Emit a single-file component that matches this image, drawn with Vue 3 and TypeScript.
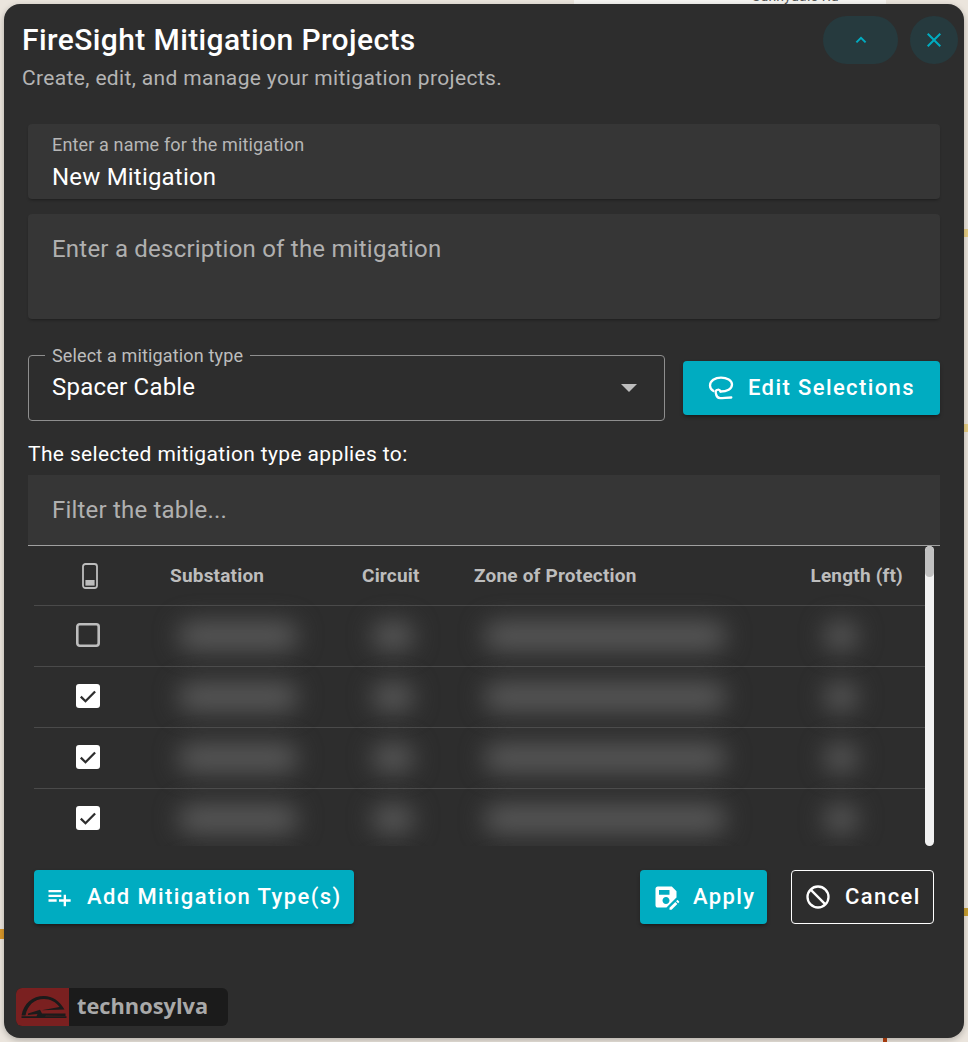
<script setup lang="ts">
const columns = ['sub', 'cir', 'zone', 'len'] as const
const rows = [
  { id: 1, checked: false },
  { id: 2, checked: true },
  { id: 3, checked: true },
  { id: 4, checked: true },
  { id: 5, checked: true },
]
</script>

<template>
  <div class="page">
    <div class="map" aria-hidden="true">
      <i class="strip"></i>
      <span class="street">Sunnydale Rd</span>
      <i class="road r1"></i><i class="road r2"></i><i class="road r3"></i><i class="road r4"></i>
      <i class="red"></i>
    </div>
    <section class="dialog">
      <header class="head">
        <div>
          <h1>FireSight Mitigation Projects</h1>
          <p>Create, edit, and manage your mitigation projects.</p>
        </div>
        <div class="head-actions">
          <button class="tonal pill" aria-label="Collapse">
            <svg width="16" height="16" viewBox="0 0 16 16"><path d="M3.4 10.4 8 5.8l4.6 4.6" fill="none" stroke="currentColor" stroke-width="2"/></svg>
          </button>
          <button class="tonal round" aria-label="Close">
            <svg width="24" height="24" viewBox="0 0 24 24"><path d="M19 6.41 17.59 5 12 10.59 6.41 5 5 6.41 10.59 12 5 17.59 6.41 19 12 13.41 17.59 19 19 17.59 13.41 12z" fill="currentColor"/></svg>
          </button>
        </div>
      </header>

      <div class="body">
        <div class="field name">
          <label>Enter a name for the mitigation</label>
          <div class="value">New Mitigation</div>
        </div>
        <div class="field desc">Enter a description of the mitigation</div>

        <div class="type-row">
          <div class="select">
            <span class="legend">Select a mitigation type</span>
            <span class="value">Spacer Cable</span>
            <i class="caret"></i>
          </div>
          <button class="btn edit">
            <svg width="28" height="28" viewBox="0 0 28 28" fill="none" stroke="currentColor" stroke-width="2.3" stroke-linecap="round"><path d="M7.5 17C5 15.6 4 13.4 4 11.5 4 6.8 9 3.6 15 3.6c6 0 11 3 11 6.9 0 4.4-5 7-11.5 7"/><path d="M14.5 17.5c-.4-1.4-1.6-2-2.8-1.8-1.4.2-2.2 1.4-2 2.8.4 3 1.8 5.6 4.6 5.6 3.400 0 6.600-.6 11-.6"/></svg>
            Edit Selections
          </button>
        </div>

        <div class="applies">The selected mitigation type applies to:</div>
        <div class="filter">Filter the table...</div>

        <div class="table-wrap">
          <div class="table">
            <div class="row header">
              <div class="c-check">
                <svg width="16" height="26" viewBox="0 0 16 26"><rect x="1" y="1" width="14" height="24" rx="2.5" fill="none" stroke="#bdbdbd" stroke-width="1.8"/><rect x="3.4" y="17" width="9.2" height="5.6" fill="#bdbdbd"/></svg>
              </div>
              <div>Substation</div>
              <div>Circuit</div>
              <div>Zone of Protection</div>
              <div class="right">Length (ft)</div>
            </div>
            <div v-for="r in rows" :key="r.id" class="row">
              <div class="c-check">
                <svg v-if="r.checked" width="24" height="24" viewBox="0 0 24 24"><rect width="24" height="24" rx="3" fill="#fff"/><path d="m4.800 12.600 4.700 4.600 9.600-9.700" fill="none" stroke="#2d2d2d" stroke-width="2.300"/></svg>
                <svg v-else width="24" height="24" viewBox="0 0 24 24"><rect x="1.300" y="1.300" width="21.400" height="21.400" rx="2.400" fill="none" stroke="#bdbdbd" stroke-width="2.600"/></svg>
              </div>
              <div v-for="c in columns" :key="c" class="cell"><span class="blur" :class="c"></span></div>
            </div>
          </div>
          <div class="scrollbar"><i class="thumb"></i></div>
        </div>

        <footer class="actions">
          <button class="btn add">
            <svg width="28" height="28" viewBox="0 0 24 24" fill="currentColor"><path d="M14 10H3v2h11v-2zm0-4H3v2h11V6zm4 8v-4h-2v4h-4v2h4v4h2v-4h4v-2h-4zM3 16h7v-2H3v2z"/></svg>
            Add Mitigation Type(s)
          </button>
          <span class="grow"></span>
          <button class="btn apply">
            <svg width="28" height="28" viewBox="0 0 24 24" fill="currentColor"><path d="M21 12.4V7l-4-4H5C3.89 3 3 3.9 3 5v14c0 1.1.89 2 2 2h7.4L21 12.4zM15 15c0 1.66-1.34 3-3 3s-3-1.34-3-3 1.34-3 3-3 3 1.34 3 3zM6 6h9v4H6V6zm13.99 10.25 1.77 1.77L16.77 23H15v-1.77l4.99-4.98zm3.26.26-.85.85-1.77-1.77.85-.85c.2-.2.51-.2.71 0l1.06 1.06c.2.19.2.51 0 .71z"/></svg>
            Apply
          </button>
          <button class="btn cancel">
            <svg width="28" height="28" viewBox="0 0 24 24" fill="none" stroke="currentColor" stroke-width="2"><circle cx="12" cy="12" r="9"/><path d="M5.700 5.700l12.600 12.600"/></svg>
            Cancel
          </button>
        </footer>

        <div class="logo">
          <span class="mark">
            <svg width="53" height="38" viewBox="0 0 53 38" fill="#1b1b1b"><path d="M5.500 27.500C7.500 15.500 16.500 8 28 8c8.500 0 15.500 5 20.500 13.500l-23 .8 18-3.300C40 14 34.500 11 28 11 18.500 11 11.500 17 9.500 27.500z"/><path d="M12 25.500l12-3.700 2 3.700h23.500v2.600L30 27.700l-1 .6h21.500v1.600H5.500v-1.600h15l1-2.300-9.500 1z"/></svg>
          </span>
          <span class="word">technosylva</span>
        </div>
      </div>
    </section>
  </div>
</template>

<style>
html, body { margin: 0; background: #ebe5dd; }
</style>

<style scoped>
* { box-sizing: border-box; }
.page { position: relative; width: 968px; height: 1042px; padding: 4px; overflow: hidden; font-family: Roboto, "Liberation Sans", sans-serif; }
.map { position: absolute; inset: 0; overflow: hidden; }
.strip { position: absolute; left: 574px; top: 0; width: 312px; height: 4px; background: #f6f5f2; }
.street { position: absolute; left: 752px; top: -12px; font-size: 14px; line-height: 16px; color: #555; white-space: nowrap; letter-spacing: .2px; }
.road { position: absolute; display: block; }
.r1 { right: 0; top: 229px; width: 4px; height: 8px; background: #e8cf86; }
.r2 { right: 0; top: 424px; width: 4px; height: 8px; background: #e8cf86; }
.r3 { left: 0; top: 929px; width: 4px; height: 10px; background: #d9982a; }
.r4 { right: 0; top: 908px; width: 4px; height: 8px; background: #c9a033; }
.red { position: absolute; left: 883px; bottom: 0; width: 4px; height: 4px; background: #b5410e; }

.dialog { position: relative; display: flex; flex-direction: column; height: 1034px; background: #2d2d2d; border-radius: 16px; color: #fff; box-shadow: 0 2px 6px rgba(0,0,0,.25); }
.head { display: flex; justify-content: space-between; padding: 12px 6px 0 18px; height: 120px; }
h1 { margin: 6px 0 0; font-size: 30px; line-height: 36px; font-weight: 500; letter-spacing: .4px; white-space: nowrap; }
.head p { margin: 5px 0 0; font-size: 21px; line-height: 30px; color: #b4b4b4; letter-spacing: .36px; }
.head-actions { display: flex; gap: 12px; }
.tonal { height: 48px; border: 0; padding: 0; display: flex; align-items: center; justify-content: center; background: #263a3e; color: #00acc1; }
.pill { width: 75px; border-radius: 24px; }
.round { width: 48px; border-radius: 50%; }

.body { display: flex; flex-direction: column; padding: 0 24px; flex: 1; }
.field { background: #363636; border-radius: 4px; box-shadow: 0 2px 3px -1px rgba(0,0,0,.35); padding: 0 24px; }
.name { height: 75px; padding-top: 11px; }
.name label { display: block; font-size: 18px; line-height: 20px; letter-spacing: .15px; color: #b7b7b7; }
.name .value { margin-top: 7px; }
.value { font-size: 24px; line-height: 30px; letter-spacing: .2px; color: #fff; }
.desc { height: 105px; margin-top: 15px; padding-top: 19px; font-size: 24px; line-height: 32px; letter-spacing: .22px; color: #b0b0b0; }

.type-row { display: flex; align-items: center; gap: 18px; margin-top: 36px; height: 66px; }
.select { position: relative; flex: 1; height: 66px; border: 1px solid #8e8e8e; border-radius: 4px; display: flex; align-items: center; padding: 0 23px 2px; }
.legend { position: absolute; left: 16px; top: -10px; padding: 0 7px; background: #2d2d2d; font-size: 18px; line-height: 20px; letter-spacing: .15px; color: #bdbdbd; white-space: nowrap; }
.caret { position: absolute; right: 27px; top: 28px; border: 8px solid transparent; border-top: 8px solid #bdbdbd; border-bottom: 0; }

.btn { height: 54px; display: flex; align-items: center; border-radius: 4px; border: 0; font: 500 22px/1 Roboto, sans-serif; letter-spacing: 1.4px; color: #fff; background: #00acc1; box-shadow: 0 3px 3px -2px rgba(0,0,0,.3), 0 2px 4px rgba(0,0,0,.2); padding: 0; }
.edit { width: 257px; padding-left: 23px; gap: 14px; }
.add { width: 320px; padding-left: 11px; gap: 14px; margin-left: 6px; }
.apply { width: 127px; padding-left: 12px; gap: 13px; }
.cancel { width: 143px; padding-left: 12px; gap: 13px; background: transparent; border: 1px solid #fff; margin-left: 24px; margin-right: 6px; box-shadow: none; }

.applies { margin-top: 21px; height: 33px; font-size: 21px; line-height: 24px; letter-spacing: .36px; color: #fff; }
.filter { height: 71px; background: #363636; border-bottom: 1px solid #a0a0a0; padding: 19px 24px 0; font-size: 24px; line-height: 32px; letter-spacing: .2px; color: #b0b0b0; }

.table-wrap { display: flex; height: 300px; padding: 0 6px; }
.table { flex: 1; height: 300px; overflow: hidden; }
.row { display: grid; grid-template-columns: 136px 192px 112px 1fr 120px; height: 61px; align-items: center; border-bottom: 1px solid #4a4a4a; }
.row.header { height: 60px; font-weight: 700; font-size: 19px; color: #bdbdbd; letter-spacing: .2px; }
.right { text-align: right; padding-right: 22px; white-space: nowrap; }
.c-check { display: flex; justify-content: center; padding: 0 28px 2px 0; }
.header .c-check { padding: 0 24px 0 0; }
.cell { height: 60px; display: flex; align-items: center; }
.blur { display: block; height: 28px; background: #595959; filter: blur(12px); border-radius: 14px; flex: none; }
.sub { width: 120px; margin-left: 8px; }
.cir { width: 42px; margin-left: 10px; }
.zone { width: 242px; margin-left: 10px; }
.len { width: 34px; margin-left: 19px; }
.scrollbar { width: 9px; height: 300px; background: #f1f1f1; border-radius: 5px; overflow: hidden; }
.thumb { display: block; height: 31px; background: #c1c1c1; border-radius: 5px; }

.actions { display: flex; align-items: center; margin-top: 24px; }
.grow { flex: 1; }

.logo { display: flex; width: 212px; height: 38px; margin: 64px 0 0 -12px; background: #1b1b1b; border-radius: 6px; overflow: hidden; }
.mark { width: 53px; background: #7a2020; display: flex; }
.word { padding-left: 8px; font: 700 21.8px/35px "Open Sans", sans-serif; color: #a9a9a9; }
</style>
